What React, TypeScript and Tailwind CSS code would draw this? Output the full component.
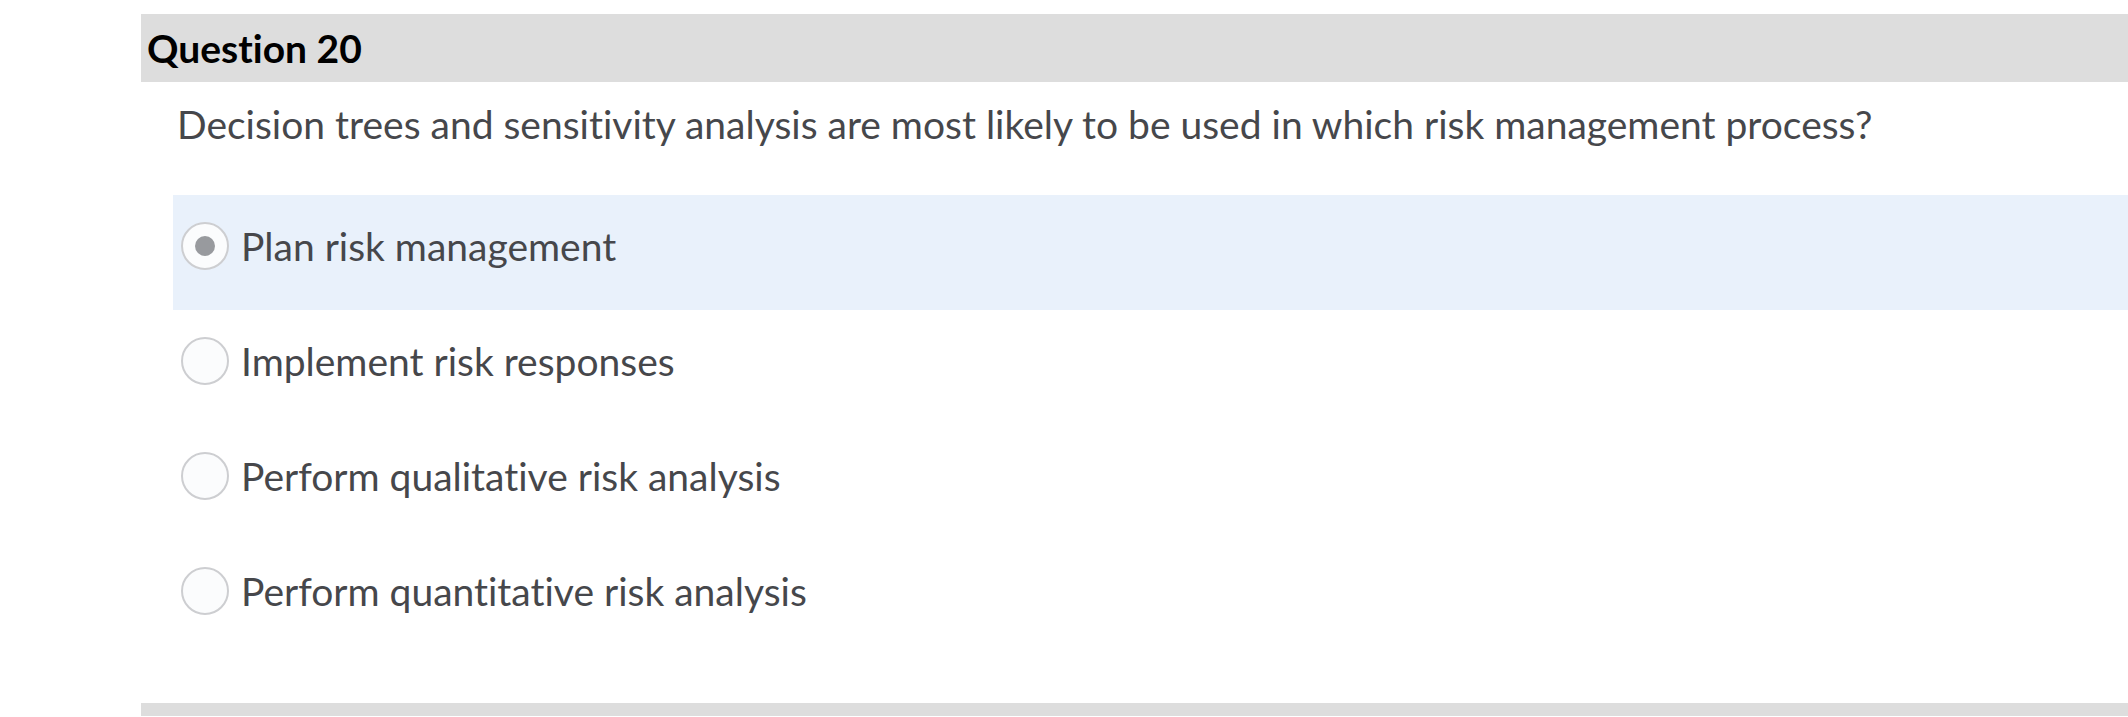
import { useState } from "react";

const options = [
  "Plan risk management",
  "Implement risk responses",
  "Perform qualitative risk analysis",
  "Perform quantitative risk analysis",
];

export default function App() {
  const [selected, setSelected] = useState(0);

  return (
    <main
      className="min-h-[717px] bg-white pl-[141px] pt-[14px] text-[#46474b] [font-variant-ligatures:none]"
      style={{ fontFamily: "Lato, 'Open Sans', sans-serif" }}
    >
      {/* question header */}
      <div className="flex h-[68px] items-center bg-[#dddddd] pl-[6px]">
        <h2 className="text-[39px] font-bold text-black">Question 20</h2>
      </div>

      <div className="pl-[32px]">
        <p className="pl-[4px] pt-[20px] text-[39px] leading-[44px]">
          Decision trees and sensitivity analysis are most likely to be used in which risk management process?
        </p>

        <div className="mt-[49px] flex flex-col">
          {options.map((label, i) => {
            const active = selected === i;
            return (
              <label
                key={label}
                onClick={() => setSelected(i)}
                className={
                  "flex h-[115px] cursor-pointer items-start gap-[12px] pl-[8px] pt-[27px] " +
                  (active ? "bg-[#e9f1fb]" : "")
                }
              >
                <span className="flex h-[48px] w-[48px] shrink-0 items-center justify-center rounded-full border-2 border-[#cdced1] bg-[#fbfcfd]">
                  {active && <span className="h-[20px] w-[20px] rounded-full bg-[#989a9e]" />}
                </span>
                <span className="text-[39px] leading-[48px]">{label}</span>
              </label>
            );
          })}
        </div>
      </div>

      <div className="mt-[48px] h-[13px] bg-[#dddddd]" />
    </main>
  );
}
